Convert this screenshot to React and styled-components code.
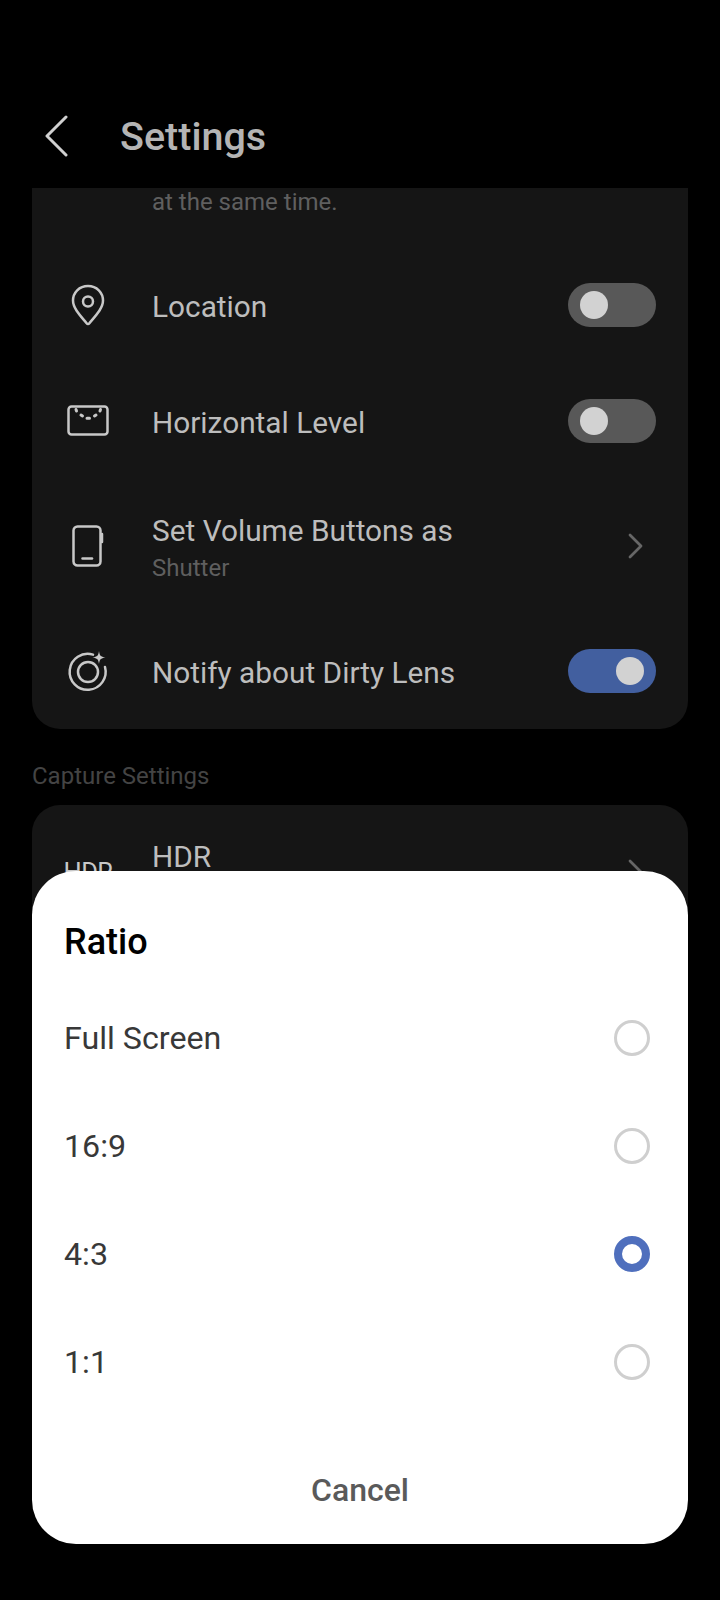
import styled, { createGlobalStyle } from "styled-components";

const Global = createGlobalStyle`
    html, body { margin: 0; padding: 0; background: #000; }
    * { box-sizing: border-box; }
`;

const Screen = styled.div`
    position: relative;
    width: 720px;
    height: 1600px;
    overflow: hidden;
    background: #000;
    font-family: Roboto, "Liberation Sans", sans-serif;
`;

const Header = styled.header`
    display: flex;
    align-items: center;
    height: 188px;
    padding: 84px 0 0 44px;
    gap: 50px;
`;

const Title = styled.h1`
    margin: 0;
    font-size: 39.5px;
    font-weight: 500;
    color: #b4b4b4;
`;

const Content = styled.main`
    padding: 0 32px;
`;

const Panel = styled.section`
    background: #151515;
    border-radius: ${(p) => (p.$clipped ? "0 0 28px 28px" : "28px")};
`;

const Leftover = styled.div`
    height: 59px;
    padding-left: 120px;
    font-size: 24px;
    line-height: 28px;
    color: #5f5f5f;
`;

const Row = styled.div`
    display: flex;
    align-items: center;
    height: ${(p) => (p.$tall ? "134px" : "116px")};
    padding: 0 32px;
`;

const IconSlot = styled.div`
    display: flex;
    align-items: center;
    justify-content: center;
    flex: none;
    width: 48px;
    margin-right: 40px;
    color: #c8c8c8;
`;

const HdrGlyph = styled.span`
    font-size: 25.5px;
    letter-spacing: -0.5px;
    color: #c8c8c8;
`;

const RowText = styled.div`
    flex: 1;
    padding-top: 4px;
`;

const Label = styled.div`
    font-size: 29.8px;
    line-height: 36px;
    color: #bdbdbd;
`;

const Sub = styled.div`
    font-size: 24px;
    line-height: 30px;
    margin-top: 4px;
    color: #5f5f5f;
`;

const SectionLabel = styled.div`
    height: 76px;
    padding-top: 33px;
    font-size: 24px;
    line-height: 28px;
    color: #444;
`;

const Toggle = styled.div`
    display: flex;
    align-items: center;
    justify-content: ${(p) => (p.$on ? "flex-end" : "flex-start")};
    width: 88px;
    height: 44px;
    padding: 0 12px;
    border-radius: 22px;
    background: ${(p) => (p.$on ? "#425f9f" : "#585858")};
`;

const Knob = styled.div`
    width: 28px;
    height: 28px;
    border-radius: 50%;
    background: #d2d2d2;
`;

const ChevronSlot = styled.div`
    display: flex;
    margin-right: 12px;
`;

const Dialog = styled.div`
    position: absolute;
    left: 32px;
    top: 871px;
    width: 656px;
    height: 673px;
    padding: 0 32px;
    border-radius: 44px;
    background: #fff;
`;

const DialogTitle = styled.h2`
    display: flex;
    align-items: center;
    height: 113px;
    margin: 0;
    padding-top: 28px;
    font-size: 36px;
    font-weight: 500;
    color: #000;
`;

const Option = styled.div`
    display: flex;
    align-items: center;
    justify-content: space-between;
    height: 108px;
    padding-right: 6px;
    font-size: 32.2px;
    color: #383838;
`;

const Radio = styled.div`
    width: 36px;
    height: 36px;
    border-radius: 50%;
    border: ${(p) => (p.$on ? "8px solid #4f6fbd" : "3px solid #cfcfcf")};
`;

const Cancel = styled.div`
    margin-top: 20px;
    height: 108px;
    line-height: 108px;
    text-align: center;
    font-size: 32px;
    font-weight: 500;
    color: #5a5a5a;
`;

const BackIcon = () => (
    <svg width="26" height="42" viewBox="0 0 26 42" fill="none" stroke="#d0d0d0" strokeWidth="3" strokeLinecap="round" strokeLinejoin="round">
        <path d="M22 2 L3 21 L22 40" />
    </svg>
);

const ChevronIcon = () => (
    <svg width="16" height="26" viewBox="0 0 16 26" fill="none" stroke="#666" strokeWidth="2.8" strokeLinecap="round" strokeLinejoin="round">
        <path d="M2 2 L13 13 L2 24" />
    </svg>
);

const PinIcon = () => (
    <svg width="34" height="42" viewBox="0 0 34 42" fill="none" stroke="currentColor" strokeWidth="2.5" strokeLinejoin="round">
        <path d="M17 2 C8.2 2 2 8.6 2 16.6 C2 24.4 9.6 32 15.6 39.2 C16.4 40.2 17.6 40.2 18.4 39.2 C24.4 32 32 24.4 32 16.6 C32 8.6 25.8 2 17 2 Z" />
        <circle cx="17" cy="17.5" r="5" />
    </svg>
);

const LevelIcon = () => (
    <svg width="42" height="32" viewBox="0 0 42 32" fill="none" stroke="currentColor" strokeLinecap="round">
        <rect x="1.5" y="1.5" width="39" height="28" rx="3" strokeWidth="2.5" />
        <path d="M9 4.5 L9.5 6 M14 10 L15.5 11 M20 13.2 L22.5 13.2 M27.5 11 L29 10 M33 6 L33.5 4.5" strokeWidth="3" />
    </svg>
);

const PhoneIcon = () => (
    <svg width="32" height="42" viewBox="0 0 32 42" fill="none" stroke="currentColor" strokeWidth="2.5" strokeLinecap="round">
        <rect x="1.5" y="1.5" width="27" height="39" rx="4" />
        <path d="M30 9 L30 17" />
        <path d="M10.5 33.5 L20 33.5" />
    </svg>
);

const LensIcon = () => (
    <svg width="42" height="42" viewBox="0 0 42 42" fill="none" stroke="currentColor" strokeWidth="2.5" strokeLinecap="round">
        <path d="M26 4.6 A18 18 0 1 0 38 17" />
        <circle cx="21" cy="22" r="10" />
        <path d="M32 1 C32.6 5.6 33.6 6.8 38.5 7.5 C33.6 8.2 32.6 9.4 32 14 C31.4 9.4 30.4 8.2 25.5 7.5 C30.4 6.8 31.4 5.6 32 1 Z" fill="currentColor" stroke="none" />
    </svg>
);

const SettingRow = ({ icon, label, sub, tall, children }) => (
    <Row $tall={tall}>
        <IconSlot>{icon}</IconSlot>
        <RowText>
            <Label>{label}</Label>
            {sub && <Sub>{sub}</Sub>}
        </RowText>
        {children}
    </Row>
);

const ratios = ["Full Screen", "16:9", "4:3", "1:1"];

export default function App() {
    return (
        <Screen>
            <Global />
            <Header>
                <BackIcon />
                <Title>Settings</Title>
            </Header>
            <Content>
                <Panel $clipped>
                    <Leftover>at the same time.</Leftover>
                    <SettingRow icon={<PinIcon />} label="Location">
                        <Toggle><Knob /></Toggle>
                    </SettingRow>
                    <SettingRow icon={<LevelIcon />} label="Horizontal Level">
                        <Toggle><Knob /></Toggle>
                    </SettingRow>
                    <SettingRow icon={<PhoneIcon />} label="Set Volume Buttons as" sub="Shutter" tall>
                        <ChevronSlot><ChevronIcon /></ChevronSlot>
                    </SettingRow>
                    <SettingRow icon={<LensIcon />} label="Notify about Dirty Lens">
                        <Toggle $on><Knob /></Toggle>
                    </SettingRow>
                </Panel>
                <SectionLabel>Capture Settings</SectionLabel>
                <Panel>
                    <SettingRow icon={<HdrGlyph>HDR</HdrGlyph>} label="HDR" sub="Auto" tall>
                        <ChevronSlot><ChevronIcon /></ChevronSlot>
                    </SettingRow>
                </Panel>
            </Content>
            <Dialog>
                <DialogTitle>Ratio</DialogTitle>
                {ratios.map((r) => (
                    <Option key={r}>
                        {r}
                        <Radio $on={r === "4:3"} />
                    </Option>
                ))}
                <Cancel>Cancel</Cancel>
            </Dialog>
        </Screen>
    );
}
